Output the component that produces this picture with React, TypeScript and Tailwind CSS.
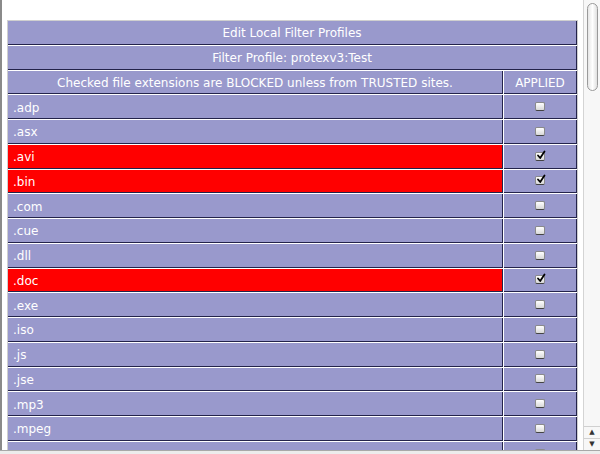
import React from 'react';

const extensions: { ext: string; blocked: boolean }[] = [
    { ext: '.adp', blocked: false },
    { ext: '.asx', blocked: false },
    { ext: '.avi', blocked: true },
    { ext: '.bin', blocked: true },
    { ext: '.com', blocked: false },
    { ext: '.cue', blocked: false },
    { ext: '.dll', blocked: false },
    { ext: '.doc', blocked: true },
    { ext: '.exe', blocked: false },
    { ext: '.iso', blocked: false },
    { ext: '.js', blocked: false },
    { ext: '.jse', blocked: false },
    { ext: '.mp3', blocked: false },
    { ext: '.mpeg', blocked: false },
    // next row only peeks in at the bottom edge, its label is below the fold
    { ext: '', blocked: false },
];

const CheckBox: React.FC<{ checked: boolean }> = ({ checked }) => (
    <span className="relative inline-block w-[10px] h-[9px] rounded-[2px] border border-[#8a8a8a] border-b-[#444] bg-gradient-to-b from-white to-[#d8d8d8]">
        {checked && (
            <svg viewBox="0 0 10 10" className="absolute -top-[3px] left-[0px] w-[10px] h-[10px]">
                <path d="M2 5.5 L4.2 8 L8.5 1.5" fill="none" stroke="#000" strokeWidth="1.8" strokeLinecap="round" strokeLinejoin="round" />
            </svg>
        )}
    </span>
);

const Cell: React.FC<{ className?: string; children?: React.ReactNode }> = ({ className = '', children }) => (
    <div className={`h-[23.75px] flex items-center border-b border-r border-[#23234a] text-white ${className}`}>
        {children}
    </div>
);

export default function App() {
    return (
        <div className="w-[600px] h-[454px] bg-white overflow-hidden flex flex-col font-['DejaVu_Sans','Verdana',sans-serif] text-[12px]">
            <div className="h-[450px] flex border-l-2 border-[#8a8a8a]">
                <div className="flex-1 overflow-hidden pt-[20px] pl-[5px]">
                    <div className="w-[571px] border border-[#cfcfcf] bg-white flex flex-col gap-px">
                        <Cell className="bg-[#9999cc] justify-center pt-[2px]">Edit Local Filter Profiles</Cell>
                        <Cell className="bg-[#9999cc] justify-center pt-[2px]">Filter Profile: protexv3:Test</Cell>
                        <div className="flex gap-px">
                            <Cell className="w-[495px] bg-[#9999cc] justify-center pt-[2px]">
                                Checked file extensions are BLOCKED unless from TRUSTED sites.
                            </Cell>
                            <Cell className="w-[73px] bg-[#9999cc] justify-center pt-[2px]">APPLIED</Cell>
                        </div>
                        {extensions.map((row, i) => (
                            <div key={i} className="flex gap-px">
                                <Cell className={`w-[495px] pl-[5px] pt-[2px] ${row.blocked ? 'bg-[#ff0000]' : 'bg-[#9999cc]'}`}>
                                    {row.ext}
                                </Cell>
                                <Cell className="w-[73px] bg-[#9999cc] justify-center">
                                    <CheckBox checked={row.blocked} />
                                </Cell>
                            </div>
                        ))}
                    </div>
                </div>
                {/* scrollbar */}
                <div className="w-[17px] border-l border-[#d4d4d4] bg-[#f7f7f7] flex flex-col items-center">
                    <div className="mt-[3px] w-[11px] h-[88px] rounded-full border border-[#9a9a9a] bg-gradient-to-r from-[#e6e6e6] via-white to-[#e0e0e0]" />
                    <div className="flex-1" />
                    <div className="w-full border-t border-[#d0d0d0] h-[12px] flex items-center justify-center text-[7px] text-[#333] leading-none">▲</div>
                    <div className="w-full border-t border-[#d0d0d0] h-[12px] flex items-center justify-center text-[7px] text-[#333] leading-none">▼</div>
                </div>
            </div>
            <div className="flex-1 border-t border-[#a8a8a8] bg-[#ececec]" />
        </div>
    );
}
